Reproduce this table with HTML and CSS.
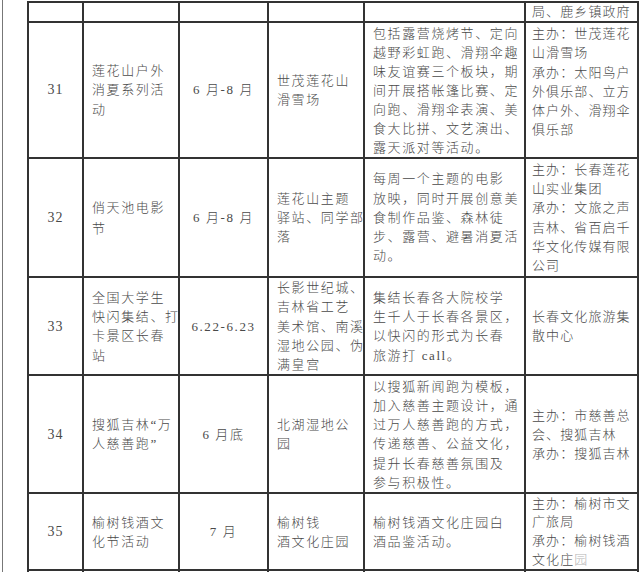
FILE: index.html
```html
<!DOCTYPE html>
<html lang="zh-CN">
<head>
<meta charset="utf-8">
<title>活动表</title>
<link rel="stylesheet" href="styles.css">
</head>
<body>
<div class="page">
<table class="grid">
<colgroup>
<col class="c-no"><col class="c-name"><col class="c-time"><col class="c-place"><col class="c-desc"><col class="c-org">
</colgroup>
<tbody>
<tr class="r-top">
<td></td><td></td><td></td><td></td><td></td>
<td class="txt org">局、鹿乡镇政府</td>
</tr>
<tr class="r31">
<td class="no">31</td>
<td class="txt">莲花山户外<br>消夏系列活<br>动</td>
<td class="time">6 月-8 月</td>
<td class="txt">世茂莲花山<br>滑雪场</td>
<td class="txt tight">包括露营烧烤节、定向<br>越野彩虹跑、滑翔伞趣<br>味友谊赛三个板块，期<br>间开展搭帐篷比赛、定<br>向跑、滑翔伞表演、美<br>食大比拼、文艺演出、<br>露天派对等活动。</td>
<td class="txt org top">主办：世茂莲花<br>山滑雪场<br>承办：太阳鸟户<br>外俱乐部、立方<br>体户外、滑翔伞<br>俱乐部</td>
</tr>
<tr class="r32">
<td class="no">32</td>
<td class="txt loose">俏天池电影<br>节</td>
<td class="time">6 月-8 月</td>
<td class="txt">莲花山主题<br>驿站、同学部<br>落</td>
<td class="txt">每周一个主题的电影<br>放映，同时开展创意美<br>食制作品鉴、森林徒<br>步、露营、避暑消夏活<br>动。</td>
<td class="txt org">主办：长春莲花<br>山实业集团<br>承办：文旅之声<br>吉林、省百启千<br>华文化传媒有限<br>公司</td>
</tr>
<tr class="r33">
<td class="no">33</td>
<td class="txt">全国大学生<br>快闪集结、打<br>卡景区长春<br>站</td>
<td class="time">6.22-6.23</td>
<td class="txt">长影世纪城、<br>吉林省工艺<br>美术馆、南溪<br>湿地公园、伪<br>满皇宫</td>
<td class="txt">集结长春各大院校学<br>生千人于长春各景区，<br>以快闪的形式为长春<br>旅游打 call。</td>
<td class="txt org">长春文化旅游集<br>散中心</td>
</tr>
<tr class="r34">
<td class="no">34</td>
<td class="txt">搜狐吉林“万<br>人慈善跑”</td>
<td class="time">6 月底</td>
<td class="txt">北湖湿地公<br>园</td>
<td class="txt">以搜狐新闻跑为模板，<br>加入慈善主题设计，通<br>过万人慈善跑的方式，<br>传递慈善、公益文化，<br>提升长春慈善氛围及<br>参与积极性。</td>
<td class="txt org">主办：市慈善总<br>会、搜狐吉林<br>承办：搜狐吉林</td>
</tr>
<tr class="r35">
<td class="no">35</td>
<td class="txt">榆树钱酒文<br>化节活动</td>
<td class="time">7 月</td>
<td class="txt">榆树钱<br>酒文化庄园</td>
<td class="txt">榆树钱酒文化庄园白<br>酒品鉴活动。</td>
<td class="txt org snug">主办：榆树市文<br>广旅局<br>承办：榆树钱酒<br>文化庄<span class="faded">园</span></td>
</tr>
<tr class="r-end">
<td></td><td></td><td></td><td></td><td></td><td></td>
</tr>
</tbody>
</table>
</div>
</body>
</html>
```

FILE: styles.css
```css
html, body {
  margin: 0;
  background: #ffffff;
}

.page {
  margin-left: 2px;
  border-left: 1px solid #777777;
  padding-left: 24px;
  padding-top: 1px;
  height: 572px;
  box-sizing: border-box;
  overflow: hidden;
}

.grid {
  border-collapse: collapse;
  table-layout: fixed;
  width: 610px;
  font-family: "Liberation Serif", "Noto Sans CJK SC", serif;
  font-size: 13px;
  font-weight: 300;
  color: #4a4a4a;
  letter-spacing: 1.6px;
  line-height: 19.3px;
}

.c-no { width: 55px; }
.c-name { width: 96px; }
.c-time { width: 89px; }
.c-place { width: 96px; }
.c-desc { width: 161px; }
.c-org { width: 113px; }

.grid td {
  border: 2px solid #333333;
  padding: 0 0 0 8px;
  vertical-align: middle;
  white-space: nowrap;
  overflow: hidden;
}

.grid td.org {
  padding-left: 6px;
  letter-spacing: 1.1px;
}

.grid td.no {
  padding: 0;
  text-align: center;
  font-size: 14px;
  font-weight: 400;
  letter-spacing: 1px;
}

.grid td.time {
  padding: 0;
  text-align: center;
  font-size: 13px;
}

.grid td.top {
  vertical-align: top;
  padding-top: 1px;
}

.grid td.tight { line-height: 19px; }
.grid td.loose { line-height: 21px; }
.grid td.snug { line-height: 18.7px; }

.faded { color: #b5b5b5; }

.r-top td { height: 18px; line-height: 18px; }
.r31 td { height: 133px; }
.r32 td { height: 117px; }
.r33 td { height: 95px; }
.r34 td { height: 116px; }
.r35 td { height: 75px; }
.r-end td { height: 10px; }
```
